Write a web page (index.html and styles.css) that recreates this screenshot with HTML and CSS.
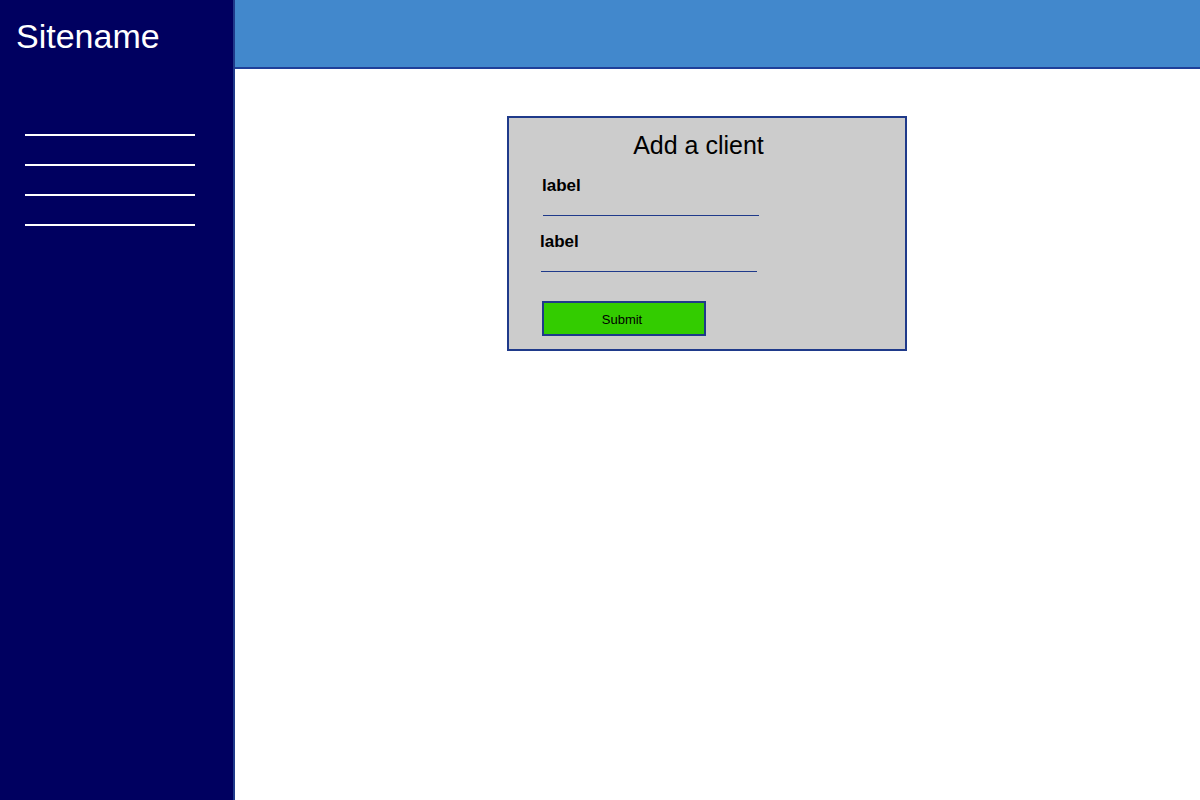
FILE: index.html
```html
<!DOCTYPE html>
<html lang="en">
<head>
<meta charset="utf-8">
<title>Add a client</title>
<link rel="stylesheet" href="styles.css">
</head>
<body>
<div class="layout">
  <aside class="sidebar">
    <div class="sitename">Sitename</div>
    <ul class="nav">
      <li class="nav-item"></li>
      <li class="nav-item"></li>
      <li class="nav-item"></li>
      <li class="nav-item"></li>
    </ul>
  </aside>
  <div class="main">
    <header class="topbar"></header>
    <section class="content">
      <form class="card">
        <h1 class="card-title">Add a client</h1>
        <div class="field">
          <label class="field-label">label</label>
          <div class="field-input"></div>
        </div>
        <div class="field field-shift">
          <label class="field-label">label</label>
          <div class="field-input"></div>
        </div>
        <button type="button" class="submit">Submit</button>
      </form>
    </section>
  </div>
</div>
</body>
</html>
```
FILE: styles.css
```css
* { box-sizing: border-box; }
html, body {
  margin: 0;
  padding: 0;
  height: 100%;
  font-family: "Liberation Sans", Arial, sans-serif;
  background: #ffffff;
}
.layout {
  display: flex;
  height: 800px;
}
.sidebar {
  width: 235px;
  flex: none;
  background: #000060;
  border-right: 2px solid #1f3a8a;
  padding-top: 16px;
}
.sitename {
  color: #ffffff;
  font-size: 34px;
  line-height: 40px;
  padding-left: 16px;
}
.nav {
  list-style: none;
  margin: 50px 0 0 25px;
  padding: 0;
  width: 170px;
}
.nav-item {
  height: 30px;
  border-bottom: 2px solid #ffffff;
}
.main {
  flex: 1;
  display: flex;
  flex-direction: column;
}
.topbar {
  height: 69px;
  background: #4288cc;
  border-bottom: 2px solid #1f3f99;
}
.content {
  padding: 47px 0 0 272px;
}
.card {
  width: 400px;
  height: 235px;
  background: #cccccc;
  border: 2px solid #1f3a8a;
  padding: 12px 33px 13px 33px;
  display: flex;
  flex-direction: column;
  align-items: flex-start;
}
.card-title {
  align-self: stretch;
  margin: 0;
  font-size: 25px;
  font-weight: normal;
  line-height: 31px;
  text-align: center;
  padding-right: 17px;
  color: #000000;
}
.field {
  margin-top: 15px;
  display: flex;
  flex-direction: column;
}
.field + .field {
  margin-top: 16px;
}
.field-shift {
  margin-left: -2px;
}
.field-label {
  font-size: 17px;
  font-weight: bold;
  line-height: 20px;
  color: #000000;
}
.field-input {
  margin-left: 1px;
  width: 216px;
  height: 20px;
  border-bottom: 1px solid #1f3a8a;
}
.submit {
  margin-top: 29px;
  width: 164px;
  height: 35px;
  background: #33cc00;
  border: 2px solid #1f3a8a;
  font-family: "Liberation Sans", Arial, sans-serif;
  font-size: 13px;
  color: #000000;
  padding: 2px 4px 0 0;
  line-height: 29px;
}
```
